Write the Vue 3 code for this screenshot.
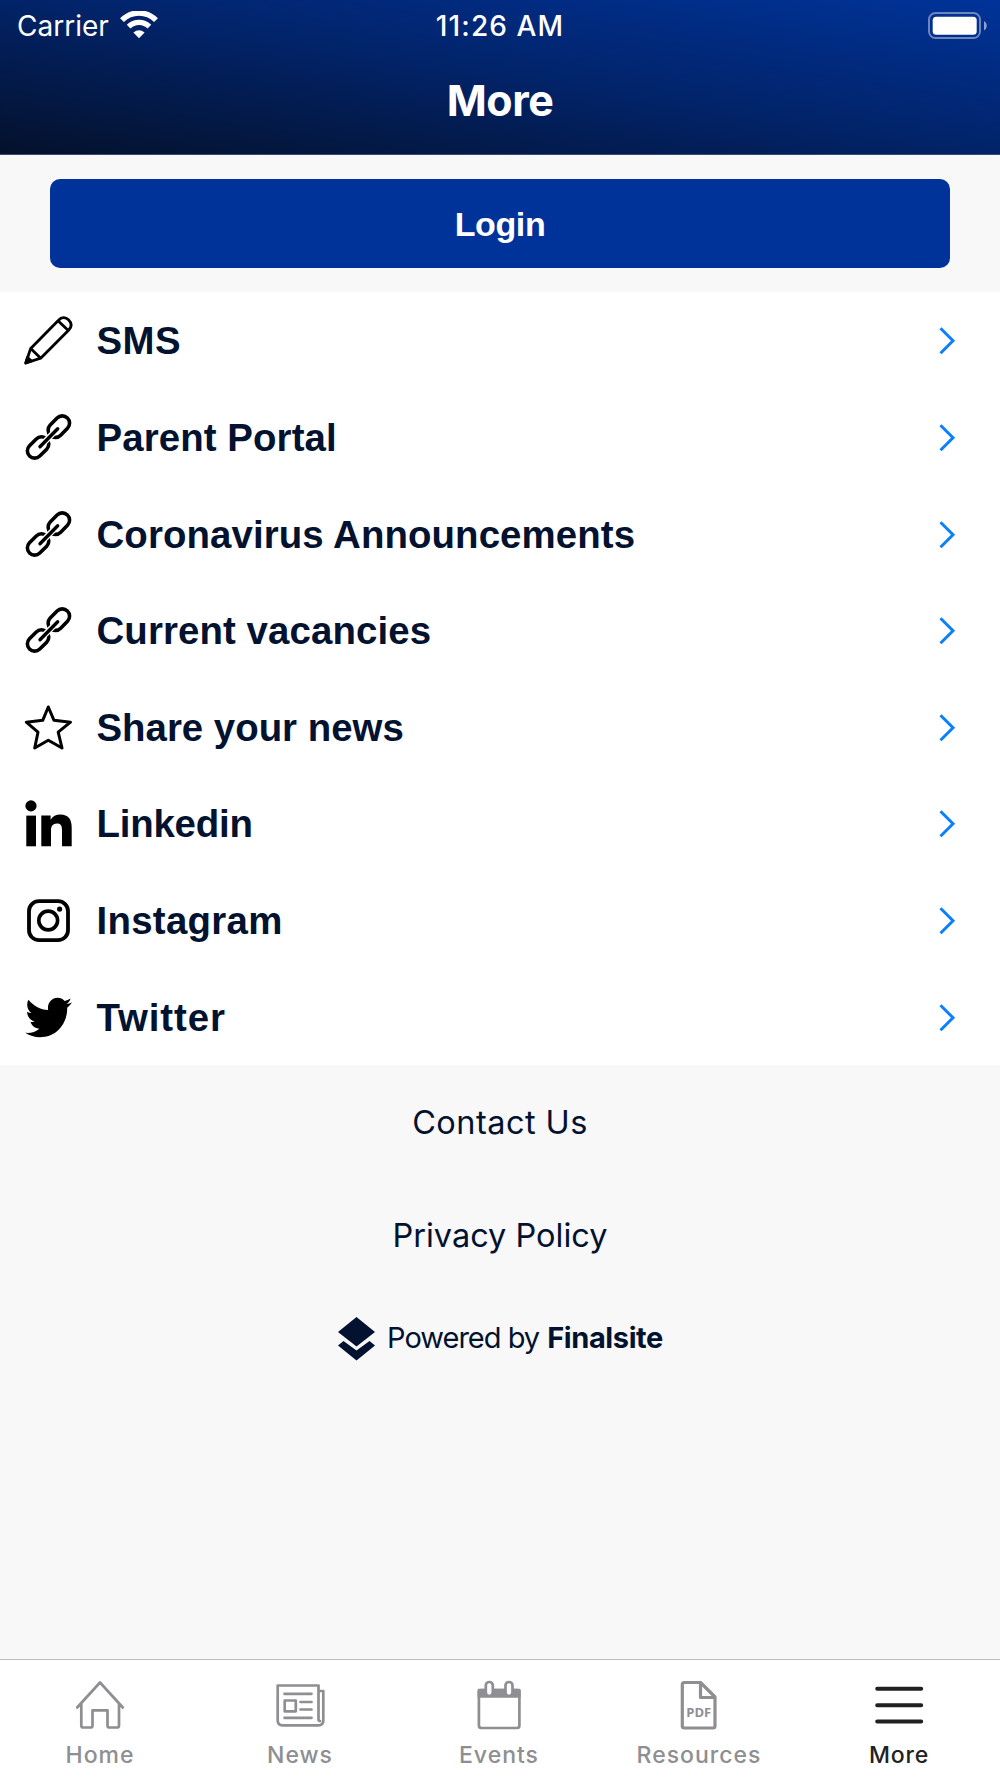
<template>
    <div class="screen">
        <header class="header">
            <div class="status">
                <div class="carrier">
                    <span class="carrier-name">Carrier</span>
                    <svg class="wifi" width="38" height="28" viewBox="0 0 38 28">
                        <path d="M2 9.200C11.500 -0.400 26.500 -0.400 36 9.200" fill="none" stroke="#fff" stroke-width="5.400" />
                        <path d="M8.600 15.700C14.500 10 23.500 10 29.400 15.700" fill="none" stroke="#fff" stroke-width="5.200" />
                        <path d="M13.400 21.600Q19 16.800 24.600 21.600L19 27.200Z" fill="#fff" />
                    </svg>
                </div>
                <span class="time">11:26 AM</span>
                <div class="battery">
                    <svg width="60" height="28" viewBox="0 0 60 28">
                        <rect x="1" y="1" width="51" height="25" rx="6.500" fill="none" stroke="#fff" stroke-opacity="0.42" stroke-width="2" />
                        <rect x="4.700" y="4.700" width="44" height="18" rx="3.500" fill="#fff" />
                        <path d="M56 9C59.600 11 59.600 16.500 56 18.500Z" fill="#fff" fill-opacity="0.55" />
                    </svg>
                </div>
            </div>
            <h1 class="title">More</h1>
        </header>

        <div class="login">
            <button class="login-button">Login</button>
        </div>

        <ul class="menu">
            <li v-for="item in items" :key="item.label" class="menu-row">
                <svg class="menu-icon" width="48" height="48" viewBox="0 0 48 48">
                    <g v-if="item.icon === 'pencil'" fill="none" stroke="#000" stroke-width="2.800" stroke-linejoin="round">
                        <path d="M6.700 32.400L34.500 4.300C37.500 1 41.500 .8 44.500 3.800C48 7.300 48 10.600 44.800 14L16.700 42.200L1.800 47Z" />
                        <path d="M34 4.800L44.300 14.600M6.700 32.400L16.700 42.200" />
                        <path d="M3.500 41.500L7.500 45L1.800 47Z" fill="#000" />
                    </g>
                    <g v-else-if="item.icon === 'chain'" fill="none" stroke="#000" stroke-width="3.600" stroke-linecap="round">
                        <path d="M26.200 12L33.100 5.100A7.200 7.200 0 0 1 43.500 15.300L36.700 22.200A7.200 7.200 0 0 1 26.200 12Z" />
                        <path d="M5.500 32.700L12.300 26A7.200 7.200 0 0 1 22.700 36.200L15.800 43A7.200 7.200 0 0 1 5.500 32.700Z" />
                        <path d="M16 33.700L33.700 15.700" stroke="#fff" stroke-width="6.200" />
                        <path d="M16 33.700L33.700 15.700" stroke-width="3.400" />
                    </g>
                    <path
                        v-else-if="item.icon === 'star'"
                        d="M24.300 4L30 17.300L46.500 19.200L34.200 29.200L38 45L24.300 37.200L10.700 45L14 29.200L2.300 19.200L18.700 17.300Z"
                        fill="none"
                        stroke="#000"
                        stroke-width="3"
                        stroke-linejoin="round"
                    />
                    <g v-else-if="item.icon === 'linkedin'">
                        <circle cx="7" cy="6.900" r="5.600" />
                        <rect x="2.300" y="16.600" width="9.700" height="30.700" />
                        <path d="M17.300 16.600H26.600V20.800C28.600 17.300 32 15.500 36.300 15.500C44.500 15.500 47.700 20.300 47.700 28.800V47.300H38V31C38 27 37 24.400 33 24.400C28.600 24.400 27 27.300 27 31.500V47.300H17.300Z" />
                    </g>
                    <g v-else-if="item.icon === 'instagram'" fill="none" stroke="#000">
                        <rect x="5" y="5.200" width="39" height="39" rx="10" stroke-width="3.800" />
                        <circle cx="24.200" cy="24.500" r="9.400" stroke-width="3.600" />
                        <circle cx="35.600" cy="13.100" r="2.600" fill="#000" stroke="none" />
                    </g>
                    <path
                        v-else
                        transform="translate(1.300 0.300) scale(1.945 2.020)"
                        d="M23.954 4.569c-.885.389-1.830.654-2.825.775 1.014-.611 1.794-1.574 2.163-2.723-.951.555-2.005.959-3.127 1.184-.896-.959-2.173-1.559-3.591-1.559-2.717 0-4.920 2.203-4.920 4.917 0 .39.045.765.127 1.124C7.691 8.094 4.066 6.130 1.640 3.161c-.427.722-.666 1.561-.666 2.475 0 1.710.87 3.213 2.188 4.096-.807-.026-1.566-.248-2.228-.616v.061c0 2.385 1.693 4.374 3.946 4.827-.413.111-.849.171-1.296.171-.314 0-.615-.03-.916-.086.631 1.953 2.445 3.377 4.604 3.417-1.680 1.319-3.809 2.105-6.102 2.105-.39 0-.779-.023-1.170-.067 2.189 1.394 4.768 2.209 7.557 2.209 9.054 0 13.999-7.496 13.999-13.986 0-.209 0-.42-.015-.63.961-.689 1.800-1.560 2.460-2.548l-.047-.02z"
                    />
                </svg>
                <span class="menu-label" :class="item.icon">{{ item.label }}</span>
                <svg class="chevron" width="18" height="28" viewBox="0 0 18 28">
                    <path d="M1.500 2.200L14 14.700L1.500 27.200" fill="none" stroke="#0a7fff" stroke-width="3" />
                </svg>
            </li>
        </ul>

        <div class="links">
            <a class="link contact">Contact Us</a>
            <a class="link privacy">Privacy Policy</a>
            <div class="powered">
                <svg width="37" height="44" viewBox="0 0 37 44" fill="#03122f">
                    <path d="M18.500 0L37 15L18.500 29.500L0 15Z" />
                    <path d="M0 28.500L5.500 24L18.500 33.500L31.500 24L37 28.500L18.500 43.500Z" />
                </svg>
                <span class="by">Powered by</span>
                <span class="brand">Finalsite</span>
            </div>
        </div>

        <nav class="tabs">
            <a
                v-for="tab in tabs"
                :key="tab.id"
                class="tab"
                :class="{ active: current === tab.id }"
                @click="current = tab.id"
            >
                <svg width="50" height="50" viewBox="0 0 50 50" fill="none" stroke="currentColor" stroke-width="2.700" stroke-linecap="round" stroke-linejoin="round">
                    <path v-if="tab.id === 'home'" d="M2.200 27.500L25 2.500L47.800 27.500M6.300 24V45.500Q6.300 47.500 8.300 47.500H15.500Q17.500 47.500 17.500 45.500V30.300H32.500V45.500Q32.500 47.500 34.500 47.500H42Q44 47.500 44 45.500V24" />
                    <g v-else-if="tab.id === 'news'">
                        <path d="M43.500 39.500V5.500H2.700V40.500Q2.700 45.300 7.500 45.300H43.500Q48.300 45.300 48.300 40.500V11H43.500V39Q43.500 41 45 41" />
                        <path d="M9.500 13.800H36.500M25.500 22H36.500M25.500 29.500H36.500M9.500 37.800H36.500M9.700 20.500H20.800V31.300H9.700Z" />
                    </g>
                    <g v-else-if="tab.id === 'events'">
                        <rect x="3.900" y="10" width="40.500" height="38" rx="2.500" />
                        <path d="M3.900 10.200H44.400V16.500H3.900Z" fill="currentColor" />
                        <rect x="10.800" y="2" width="7" height="14" rx="3.500" fill="#fff" />
                        <rect x="30.500" y="2" width="7" height="14" rx="3.500" fill="#fff" />
                    </g>
                    <g v-else-if="tab.id === 'resources'" stroke-width="3.200">
                        <path d="M25.500 2.500H9.300Q7.300 2.500 7.300 4.500V46Q7.300 48 9.300 48H38Q40 48 40 46V17L25.500 2.500V17.500H40" />
                        <text x="11.300" y="36.900" class="pdf">PDF</text>
                    </g>
                    <path v-else d="M2.200 8.700H46.200M2.200 25.200H46.200M2.200 41.500H46.200" stroke-width="4" />
                </svg>
                <span class="tab-label">{{ tab.label }}</span>
            </a>
        </nav>
    </div>
</template>

<script setup>
import { ref } from "vue";

const items = [
    { label: "SMS", icon: "pencil" },
    { label: "Parent Portal", icon: "chain" },
    { label: "Coronavirus Announcements", icon: "chain" },
    { label: "Current vacancies", icon: "chain" },
    { label: "Share your news", icon: "star" },
    { label: "Linkedin", icon: "linkedin" },
    { label: "Instagram", icon: "instagram" },
    { label: "Twitter", icon: "twitter" },
];

const tabs = [
    { id: "home", label: "Home" },
    { id: "news", label: "News" },
    { id: "events", label: "Events" },
    { id: "resources", label: "Resources" },
    { id: "more", label: "More" },
];

const current = ref("more");
</script>

<style>
body {
    background: #f8f8f8;
}
</style>

<style scoped>
.screen {
    display: flex;
    flex-direction: column;
    width: 1000px;
    height: 1778px;
    background: #f8f8f8;
    color: #03122f;
    font-family: Inter, sans-serif;
    overflow: hidden;
}

.header {
    box-sizing: border-box;
    flex: none;
    height: 155px;
    background: linear-gradient(to top right, #04112b, #022368 50%, #003399);
    border-bottom: 1px solid #3a4a78;
    color: #fff;
}

.status {
    display: grid;
    grid-template-columns: 1fr auto 1fr;
    align-items: center;
    height: 50px;
    padding: 0 17px;
    font-size: 28px;
    line-height: 52px;
}

.carrier {
    display: flex;
    align-items: center;
    gap: 11px;
}

.wifi {
    margin-top: -3px;
}

.time {
    font-weight: 500;
    letter-spacing: 1.1px;
}

.battery {
    display: flex;
    justify-content: flex-end;
    margin: -1px -5px 0 0;
}

.title {
    margin: 0;
    padding-top: 25px;
    text-align: center;
    font-size: 43px;
    font-weight: 700;
    line-height: 50px;
    letter-spacing: -0.5px;
}

.login {
    flex: none;
    box-sizing: border-box;
    height: 137px;
    padding: 24px 50px;
}

.login-button {
    display: block;
    width: 100%;
    height: 89px;
    padding: 1px 0 0;
    border: 0;
    border-radius: 10px;
    background: #003399;
    color: #fff;
    font: bold 34px "Liberation Sans", sans-serif;
    letter-spacing: -0.4px;
}

.menu {
    flex: none;
    display: grid;
    grid-template-rows: repeat(8, 1fr);
    height: 773px;
    margin: 0;
    padding: 0;
    list-style: none;
    background: #fff;
}

.menu-row {
    display: flex;
    align-items: center;
    padding: 0 43px 0 24px;
}

.menu-icon {
    flex: none;
    overflow: visible;
}

.menu-label {
    flex: 1;
    padding: 2px 0 0 24.5px;
    font-family: "Liberation Sans", sans-serif;
    font-size: 38.4px;
    font-weight: bold;
    white-space: nowrap;
}

.pencil {
    letter-spacing: 0.5px;
}

.chain {
    letter-spacing: 0.1px;
}

.linkedin {
    letter-spacing: -0.2px;
}

.instagram {
    letter-spacing: 0.3px;
}

.twitter {
    letter-spacing: 0.9px;
}

.chevron {
    overflow: visible;
}

.links {
    flex: 1;
}

.link {
    display: block;
    height: 113.5px;
    line-height: 115px;
    text-align: center;
    font-size: 32.5px;
}

.contact {
    letter-spacing: 0.45px;
}

.privacy {
    line-height: 113px;
}

.powered {
    display: flex;
    align-items: center;
    justify-content: center;
    height: 93px;
    padding-left: 1px;
    font-size: 29px;
}

.by {
    margin: 0 8px 0 12px;
    padding-bottom: 2px;
    letter-spacing: -1px;
}

.brand {
    padding-bottom: 2px;
    font-weight: 700;
    letter-spacing: -0.4px;
}

.tabs {
    flex: none;
    box-sizing: border-box;
    display: grid;
    grid-template-columns: repeat(5, 1fr);
    height: 119px;
    border-top: 1px solid #bdbdbf;
    background: #fff;
}

.tab {
    display: flex;
    flex-direction: column;
    align-items: center;
    padding-top: 20px;
    color: #8e8e93;
}

.tab.active {
    color: #212121;
}

.tab-label {
    margin-top: 10px;
    font-size: 23px;
    font-weight: 450;
    line-height: 30px;
    letter-spacing: 1px;
}

.tab:nth-child(n + 3) .tab-label {
    margin-right: 2px;
}

.active .tab-label {
    font-weight: 500;
    letter-spacing: 0.8px;
}

.pdf {
    fill: currentColor;
    stroke: none;
    font: bold 13px "Open Sans", sans-serif;
}
</style>
